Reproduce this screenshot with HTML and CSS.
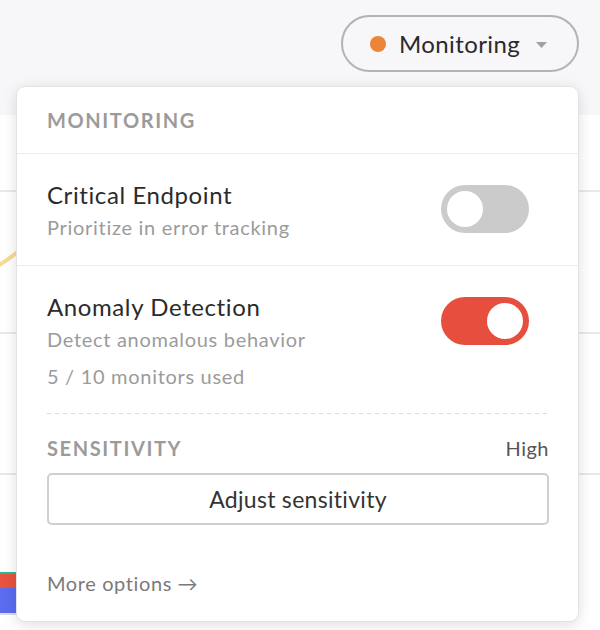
FILE: index.html
```html
<!DOCTYPE html>
<html lang="en">
<head>
<meta charset="utf-8">
<title>Monitoring</title>
<link rel="stylesheet" href="styles.css">
</head>
<body>
<div class="page">
  <header class="topbar">
    <button class="status-btn" type="button">
      <span class="dot"></span>
      <span class="status-label">Monitoring</span>
      <svg class="caret" width="11" height="6" viewBox="0 0 11 6"><path d="M0 0H11L5.5 6Z" fill="#a0a0a0"/></svg>
    </button>
  </header>

  <main class="chart">
    <div class="grid-line"></div>
    <svg class="curve" width="60" height="140" viewBox="0 0 60 140"><path d="M-4 75 Q8 68 20 58" stroke="#f6dc93" stroke-width="4" fill="none"/></svg>
    <div class="grid-line"></div>
    <div class="gap"></div>
    <div class="grid-line"></div>
    <div class="bars">
      <div class="bar teal"></div>
      <div class="bar red"></div>
      <div class="bar blue"></div>
      <div class="bar base"></div>
    </div>
  </main>

  <section class="popover">
    <div class="pop-header">MONITORING</div>

    <div class="pop-row">
      <div class="row-text">
        <div class="row-title">Critical Endpoint</div>
        <div class="row-sub">Prioritize in error tracking</div>
      </div>
      <span class="toggle"><span class="knob"></span></span>
    </div>

    <div class="pop-row last">
      <div class="row-main">
        <div class="row-text">
          <div class="row-title">Anomaly Detection</div>
          <div class="row-sub">Detect anomalous behavior</div>
          <div class="row-meta">5 / 10 monitors used</div>
        </div>
        <span class="toggle on"><span class="knob"></span></span>
      </div>
      <div class="dashed"></div>
      <div class="sens-head">
        <span class="sens-label">SENSITIVITY</span>
        <span class="sens-value">High</span>
      </div>
      <button class="adjust-btn" type="button">Adjust sensitivity</button>
      <a class="more" href="#">More options →</a>
    </div>
  </section>
</div>
</body>
</html>
```

FILE: styles.css
```css
* { box-sizing: border-box; }

html, body {
  margin: 0;
  padding: 0;
  background: #ffffff;
  font-family: Lato, "Noto Sans", "Liberation Sans", sans-serif;
}

.page {
  position: relative;
  width: 600px;
  height: 630px;
  overflow: hidden;
}

.topbar {
  height: 115px;
  background: #f7f7f9;
  display: flex;
  justify-content: flex-end;
  align-items: flex-start;
  padding: 15px 21px 0 0;
}

.status-btn {
  width: 238px;
  height: 57px;
  border: 2px solid #b3b3b3;
  border-radius: 29px;
  background: #f7f7f9;
  display: flex;
  align-items: center;
  padding: 0 0 0 27px;
  font-family: inherit;
  cursor: pointer;
}

.dot {
  width: 16px;
  height: 16px;
  border-radius: 50%;
  background: #ec8439;
  margin-right: 13px;
}

.status-label {
  font-size: 24px;
  letter-spacing: 0.4px;
  color: #2a2a2a;
  margin-right: 16px;
}

.caret { margin-top: 2px; }

.chart {
  padding-top: 75px;
}

.grid-line {
  height: 2px;
  background: #e8e8e8;
}

.curve { display: block; }

.gap { height: 139px; }

.bars {
  margin-top: 97px;
  width: 200px;
}

.bar.teal { height: 2px; background: #1fbf8f; }
.bar.red { height: 14px; background: #e8533f; }
.bar.blue { height: 25px; background: #5b6cf0; }
.bar.base { height: 2px; background: #dcdcdc; }

.popover {
  position: absolute;
  top: 86px;
  left: 16px;
  width: 563px;
  background: #ffffff;
  border: 1px solid #e3e3e3;
  border-radius: 9px;
  box-shadow: 0 3px 14px rgba(0, 0, 0, 0.13);
}

.pop-header {
  height: 67px;
  padding: 0 30px;
  display: flex;
  align-items: center;
  border-bottom: 1px solid #ececec;
  font-size: 20px;
  font-weight: 700;
  letter-spacing: 1.6px;
  color: #9b9b9b;
}

.pop-row {
  display: flex;
  justify-content: space-between;
  align-items: flex-start;
  padding: 26px 49px 25px 30px;
  border-bottom: 1px solid #ececec;
}

.pop-row.last {
  display: block;
  border-bottom: 0;
  padding: 26px 29px 25px 30px;
}

.row-main {
  display: flex;
  justify-content: space-between;
  align-items: flex-start;
  padding-right: 20px;
}

.row-title {
  font-size: 24px;
  letter-spacing: 0.6px;
  line-height: 30px;
  color: #2b2b2b;
}

.row-sub {
  font-size: 20px;
  letter-spacing: 0.7px;
  line-height: 26px;
  margin-top: 4px;
  color: #9b9b9b;
}

.row-meta {
  font-size: 20px;
  letter-spacing: 0.7px;
  line-height: 26px;
  margin-top: 11px;
  color: #9b9b9b;
}

.toggle {
  flex: none;
  width: 88px;
  height: 48px;
  border-radius: 24px;
  background: #cbcbcb;
  margin-top: 5px;
  padding: 6px;
  display: flex;
  justify-content: flex-start;
}

.toggle.on {
  background: #e64e3e;
  justify-content: flex-end;
}

.knob {
  width: 36px;
  height: 36px;
  border-radius: 50%;
  background: #ffffff;
}

.dashed {
  margin-top: 24px;
  height: 1px;
  background-image: repeating-linear-gradient(to right, #dadada 0 4px, transparent 4px 8px);
}

.sens-head {
  margin-top: 22px;
  display: flex;
  justify-content: space-between;
  align-items: center;
  line-height: 24px;
}

.sens-label {
  font-size: 20px;
  font-weight: 700;
  letter-spacing: 1.6px;
  color: #9b9b9b;
}

.sens-value {
  font-size: 20px;
  letter-spacing: 0.5px;
  color: #555555;
}

.adjust-btn {
  display: block;
  width: 100%;
  height: 52px;
  margin-top: 13px;
  border: 2px solid #cfcfcf;
  border-radius: 5px;
  background: #ffffff;
  font-family: inherit;
  font-size: 23px;
  letter-spacing: 0.3px;
  color: #333333;
  cursor: pointer;
}

.more {
  display: block;
  margin-top: 45px;
  line-height: 26px;
  font-size: 20px;
  letter-spacing: 0.6px;
  color: #7a7a7a;
  text-decoration: none;
}
```
